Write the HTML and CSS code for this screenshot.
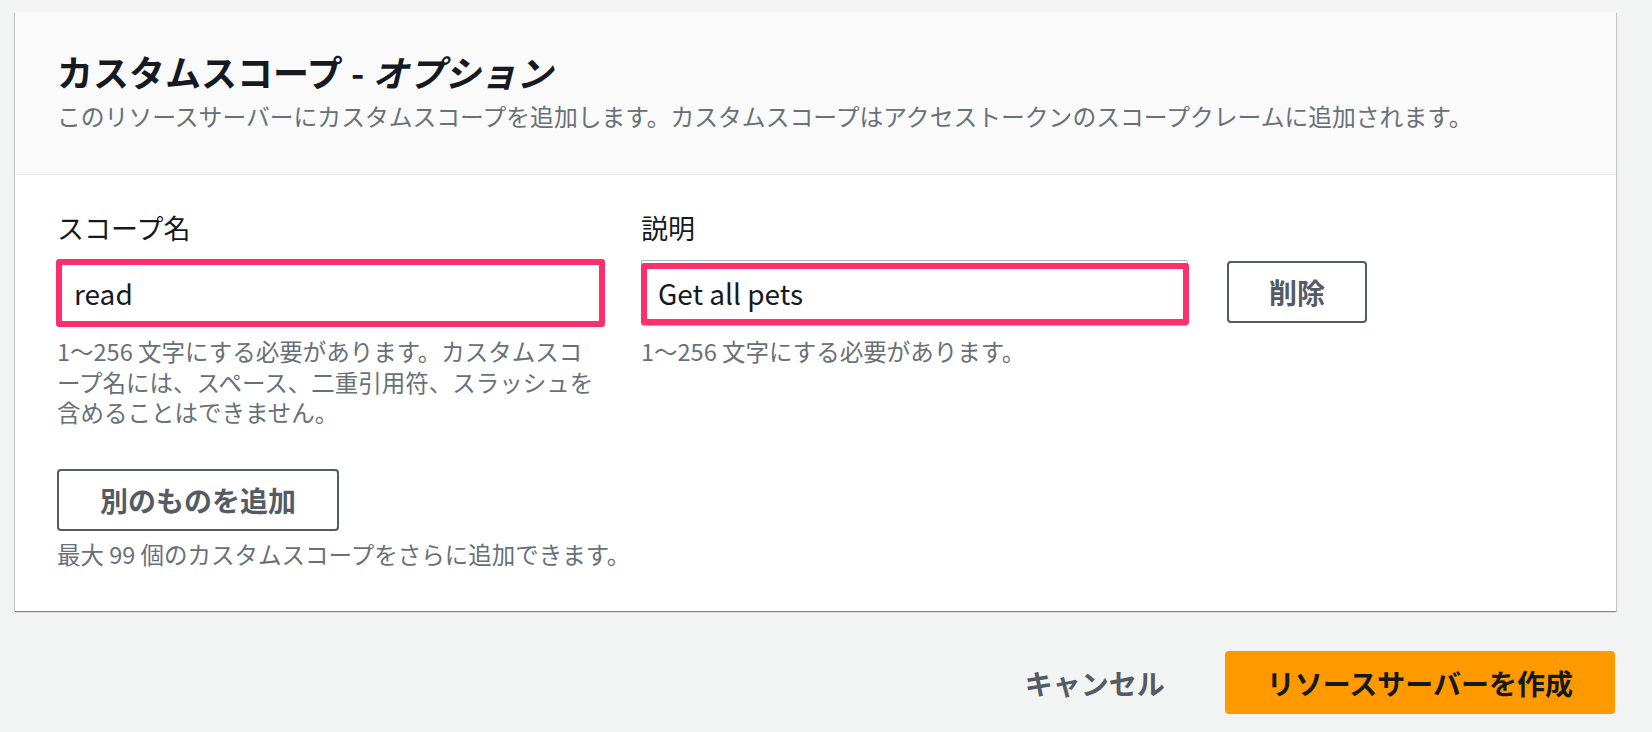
FILE: index.html
```html
<!DOCTYPE html>
<html lang="ja">
<head>
    <meta charset="UTF-8">
    <title>カスタムスコープ - オプション</title>
    <link rel="stylesheet" href="styles.css">
</head>
<body>

<div class="page">

    <!-- Card: custom scopes -->
    <section class="card">
        <header class="card-header">
            <h2 class="card-title">カスタムスコープ - <em>オプション</em></h2>
            <p class="card-desc">このリソースサーバーにカスタムスコープを追加します。カスタムスコープはアクセストークンのスコープクレームに追加されます。</p>
        </header>

        <div class="card-body">
            <div class="scope-row">
                <div class="field">
                    <label class="field-label" for="scope_name">スコープ名</label>
                    <div class="input-wrap">
                        <input class="input" id="scope_name" type="text" value="read">
                    </div>
                    <p class="hint">1〜256 文字にする必要があります。カスタムスコープ名には、スペース、二重引用符、スラッシュを含めることはできません。</p>
                </div>

                <div class="field">
                    <label class="field-label" for="scope_desc">説明</label>
                    <div class="input-wrap input-wrap-inset">
                        <input class="input" id="scope_desc" type="text" value="Get all pets">
                    </div>
                    <p class="hint">1〜256 文字にする必要があります。</p>
                </div>

                <div class="row-action">
                    <button class="btn">削除</button>
                </div>
            </div>

            <button class="btn btn-add">別のものを追加</button>
            <p class="hint hint-add">最大 99 個のカスタムスコープをさらに追加できます。</p>
        </div>
    </section>

    <!-- Botões -->
    <div class="actions">
        <button class="btn-link">キャンセル</button>
        <button class="btn-primary">リソースサーバーを作成</button>
    </div>

</div>

</body>
</html>
```

FILE: styles.css
```css
body {
    margin: 0;
    background: #f2f3f3;
    font-family: "Noto Sans CJK JP", "Noto Sans", sans-serif;
    color: #16191f;
}

.page {
    padding: 12px 36px 40px 15px;
}

.card {
    background: #fff;
    box-shadow: 0 1px 1px 0 rgba(0, 28, 36, 0.3),
                1px 1px 1px 0 rgba(0, 28, 36, 0.15),
                -1px 1px 1px 0 rgba(0, 28, 36, 0.15);
}

.card-header {
    background: #fafafa;
    border-bottom: 1px solid #eaeded;
    padding: 39px 42px 42px;
}

.card-title {
    margin: 0 0 9px;
    font-size: 36px;
    line-height: 40px;
    font-weight: 700;
}

.card-title em {
    font-style: italic;
}

.card-desc {
    margin: 0;
    font-size: 23.8px;
    line-height: 32px;
    color: #687078;
}

.card-body {
    padding: 35px 42px 42px;
}

.scope-row {
    display: flex;
    align-items: flex-start;
    gap: 37px;
}

.field {
    width: 547px;
}

.field-label {
    display: block;
    font-size: 27px;
    line-height: 36px;
    margin-bottom: 14px;
}

.input-wrap {
    position: relative;
}

/* marcação rosa por cima do campo */
.input-wrap::after {
    content: "";
    position: absolute;
    top: -1px;
    left: -1px;
    right: -1px;
    bottom: -1px;
    border: 6px solid #ff2f6d;
    border-radius: 3px;
    pointer-events: none;
}

.input-wrap-inset::after {
    top: 3px;
    left: 0;
    bottom: 1px;
}

.input {
    box-sizing: border-box;
    width: 100%;
    height: 66px;
    border: 1px solid #aab7b8;
    border-radius: 2px;
    padding: 0 16px;
    font-family: "Noto Sans CJK JP", "Noto Sans", sans-serif;
    font-size: 28px;
    color: #16191f;
    background: #fff;
}

.hint {
    margin: 10px 0 0;
    font-size: 23.5px;
    line-height: 30.5px;
    color: #687078;
    line-break: loose;
}

.row-action {
    padding-top: 51px;
    margin-left: 2px;
}

.btn {
    font-family: "Noto Sans CJK JP", "Noto Sans", sans-serif;
    font-size: 28px;
    font-weight: 700;
    color: #545b64;
    background: #fff;
    border: 2px solid #545b64;
    border-radius: 4px;
    height: 62px;
    padding: 0 40px;
    cursor: pointer;
}

.btn-add {
    margin-top: 41px;
    padding: 0 41px;
}

.hint-add {
    margin-top: 8px;
}

.actions {
    display: flex;
    justify-content: flex-end;
    gap: 20px;
    margin-top: 40px;
    padding-right: 1px;
}

.btn-link,
.btn-primary {
    font-family: "Noto Sans CJK JP", "Noto Sans", sans-serif;
    font-size: 28px;
    font-weight: 700;
    height: 63px;
    border: none;
    cursor: pointer;
}

.btn-link {
    background: none;
    color: #545b64;
    padding: 0 40px;
}

.btn-primary {
    background: #ff9900;
    color: #16191f;
    border-radius: 4px;
    padding: 0 42px;
}
```
